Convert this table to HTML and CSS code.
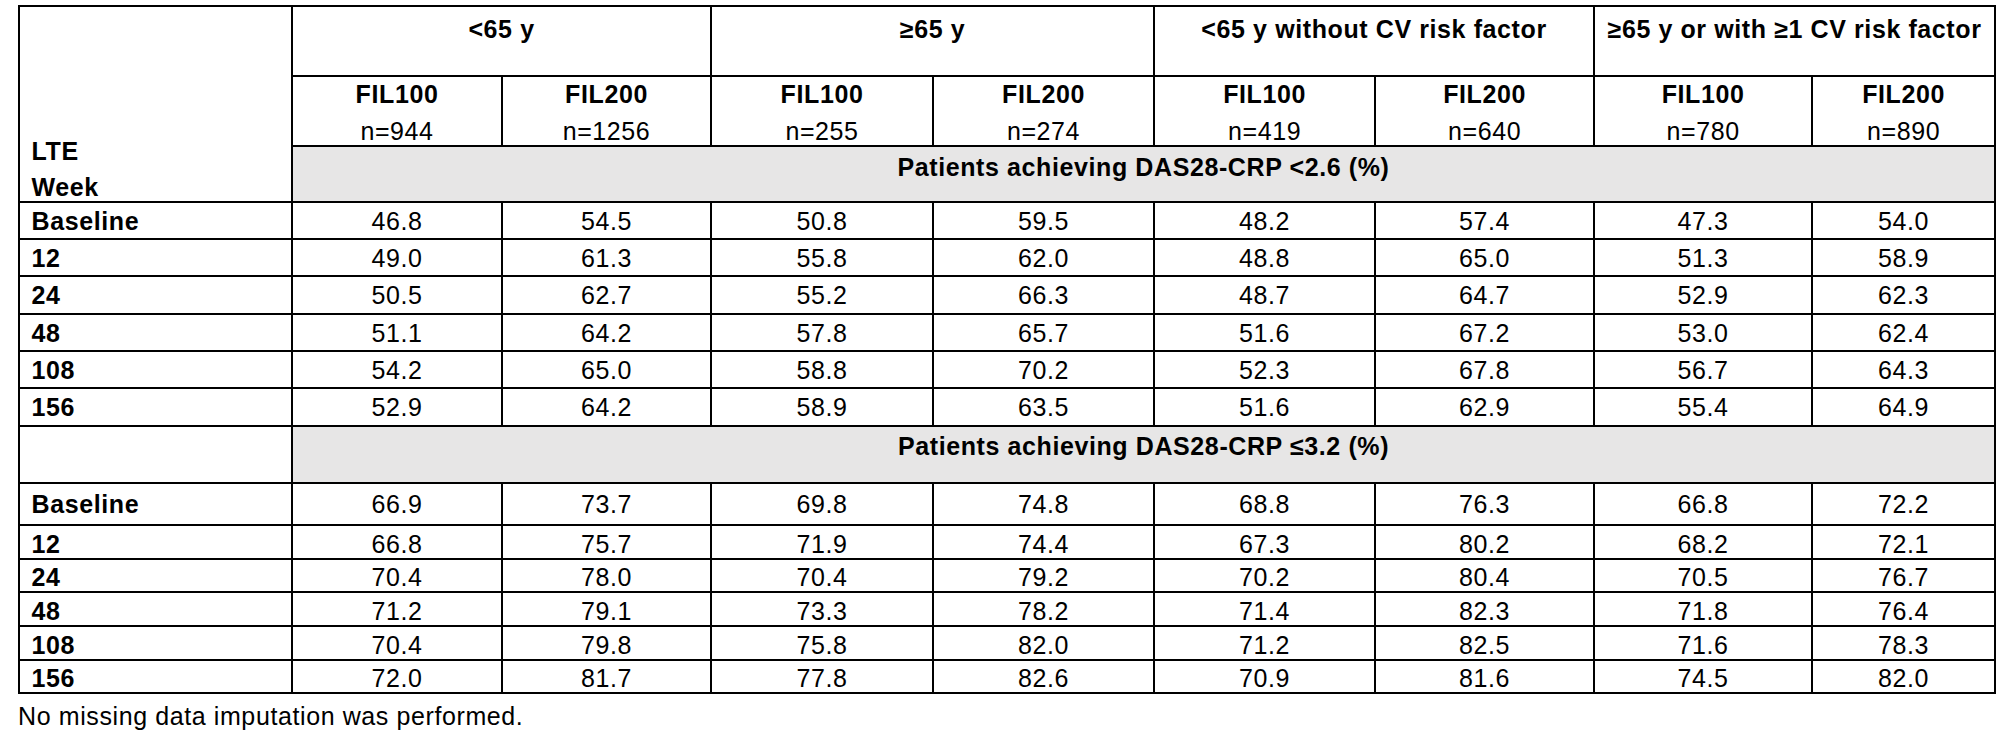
FILE: index.html
```html
<!DOCTYPE html>
<html lang="en">
<head>
<meta charset="utf-8">
<title>DAS28-CRP by age and CV risk</title>
<link rel="stylesheet" href="styles.css">
</head>
<body>
<div class="page">
  <table class="tbl">
    <colgroup>
      <col class="w273"><col class="w210"><col class="w209"><col class="w222"><col class="w221"><col class="w221"><col class="w219"><col class="w218"><col class="w183">
    </colgroup>
    <thead>
      <tr class="h70">
        <th class="lte" rowspan="3"><div>LTE</div><div class="wk">Week</div></th>
        <th class="grp" colspan="2">&lt;65 y</th>
        <th class="grp" colspan="2">&ge;65 y</th>
        <th class="grp" colspan="2">&lt;65 y without CV risk factor</th>
        <th class="grp" colspan="2">&ge;65 y or with &ge;1 CV risk factor</th>
      </tr>
      <tr class="h69">
        <th class="arm"><div>FIL100</div><div class="n">n=944</div></th>
        <th class="arm"><div>FIL200</div><div class="n">n=1256</div></th>
        <th class="arm"><div>FIL100</div><div class="n">n=255</div></th>
        <th class="arm"><div>FIL200</div><div class="n">n=274</div></th>
        <th class="arm"><div>FIL100</div><div class="n">n=419</div></th>
        <th class="arm"><div>FIL200</div><div class="n">n=640</div></th>
        <th class="arm"><div>FIL100</div><div class="n">n=780</div></th>
        <th class="arm"><div>FIL200</div><div class="n">n=890</div></th>
      </tr>
      <tr class="h56">
        <th class="band band1" colspan="8">Patients achieving DAS28-CRP &lt;2.6 (%)</th>
      </tr>
    </thead>
    <tbody>
      <tr class="h37"><th class="wkc">Baseline</th><td>46.8</td><td>54.5</td><td>50.8</td><td>59.5</td><td>48.2</td><td>57.4</td><td>47.3</td><td>54.0</td></tr>
      <tr class="h37"><th class="wkc">12</th><td>49.0</td><td>61.3</td><td>55.8</td><td>62.0</td><td>48.8</td><td>65.0</td><td>51.3</td><td>58.9</td></tr>
      <tr class="h38"><th class="wkc">24</th><td>50.5</td><td>62.7</td><td>55.2</td><td>66.3</td><td>48.7</td><td>64.7</td><td>52.9</td><td>62.3</td></tr>
      <tr class="h37"><th class="wkc">48</th><td>51.1</td><td>64.2</td><td>57.8</td><td>65.7</td><td>51.6</td><td>67.2</td><td>53.0</td><td>62.4</td></tr>
      <tr class="h37"><th class="wkc">108</th><td>54.2</td><td>65.0</td><td>58.8</td><td>70.2</td><td>52.3</td><td>67.8</td><td>56.7</td><td>64.3</td></tr>
      <tr class="h38"><th class="wkc">156</th><td>52.9</td><td>64.2</td><td>58.9</td><td>63.5</td><td>51.6</td><td>62.9</td><td>55.4</td><td>64.9</td></tr>
      <tr class="h57">
        <td class="blank"></td>
        <th class="band band2" colspan="8">Patients achieving DAS28-CRP &le;3.2 (%)</th>
      </tr>
      <tr class="h42"><th class="wkc">Baseline</th><td>66.9</td><td>73.7</td><td>69.8</td><td>74.8</td><td>68.8</td><td>76.3</td><td>66.8</td><td>72.2</td></tr>
      <tr class="h34 low"><th class="wkc">12</th><td>66.8</td><td>75.7</td><td>71.9</td><td>74.4</td><td>67.3</td><td>80.2</td><td>68.2</td><td>72.1</td></tr>
      <tr class="h33 low"><th class="wkc">24</th><td>70.4</td><td>78.0</td><td>70.4</td><td>79.2</td><td>70.2</td><td>80.4</td><td>70.5</td><td>76.7</td></tr>
      <tr class="h34 low"><th class="wkc">48</th><td>71.2</td><td>79.1</td><td>73.3</td><td>78.2</td><td>71.4</td><td>82.3</td><td>71.8</td><td>76.4</td></tr>
      <tr class="h34 low"><th class="wkc">108</th><td>70.4</td><td>79.8</td><td>75.8</td><td>82.0</td><td>71.2</td><td>82.5</td><td>71.6</td><td>78.3</td></tr>
      <tr class="h33 low"><th class="wkc">156</th><td>72.0</td><td>81.7</td><td>77.8</td><td>82.6</td><td>70.9</td><td>81.6</td><td>74.5</td><td>82.0</td></tr>
    </tbody>
  </table>
  <p class="note">No missing data imputation was performed.</p>
</div>
</body>
</html>
```

FILE: styles.css
```css
html, body {
  margin: 0;
  padding: 0;
  background: #ffffff;
}

body {
  font-family: "Liberation Sans", Arial, Helvetica, sans-serif;
  color: #000000;
}

.page {
  padding: 5px 0 0 18px;
}

.tbl {
  border-collapse: separate;
  border-spacing: 0;
  table-layout: fixed;
  width: 1978px;
  border-top: 2px solid #000;
  border-left: 2px solid #000;
  font-size: 25px;
  letter-spacing: 0.6px;
  line-height: 28px;
}

.tbl th,
.tbl td {
  border-right: 2px solid #000;
  border-bottom: 2px solid #000;
  padding: 0;
  line-height: 28px;
  white-space: nowrap;
}

.w273 { width: 273px; }
.w210 { width: 210px; }
.w209 { width: 209px; }
.w222 { width: 222px; }
.w221 { width: 221px; }
.w219 { width: 219px; }
.w218 { width: 218px; }
.w183 { width: 183px; }

.h70 { height: 70px; }
.h69 { height: 69px; }
.h56 { height: 56px; }
.h57 { height: 57px; }
.h42 { height: 42px; }
.h38 { height: 38px; }
.h37 { height: 37px; }
.h34 { height: 34px; }
.h33 { height: 33px; }

.tbl th {
  font-weight: bold;
}

.tbl td {
  text-align: center;
  vertical-align: middle;
  font-weight: normal;
}

.tbl .lte {
  text-align: left;
  vertical-align: bottom;
  padding-left: 11.5px;
}

.lte .wk {
  margin-top: 8px;
}

.tbl .grp {
  text-align: center;
  vertical-align: top;
  padding: 8px 2px 0;
}

.tbl .arm {
  text-align: center;
  vertical-align: top;
  padding-top: 3px;
}

.arm .n {
  font-weight: normal;
  margin-top: 9px;
}

.tbl .band {
  background: #e7e6e6;
  text-align: center;
  vertical-align: top;
}

.tbl .band1 { padding-top: 6px; }
.tbl .band2 { padding-top: 5px; }

.tbl .wkc {
  text-align: left;
  vertical-align: middle;
  padding-left: 11.5px;
}

.tbl .low th,
.tbl .low td {
  padding-top: 3px;
}

.note {
  margin: 8px 0 0;
  font-size: 25px;
  letter-spacing: 0.6px;
  line-height: 28px;
}
```
